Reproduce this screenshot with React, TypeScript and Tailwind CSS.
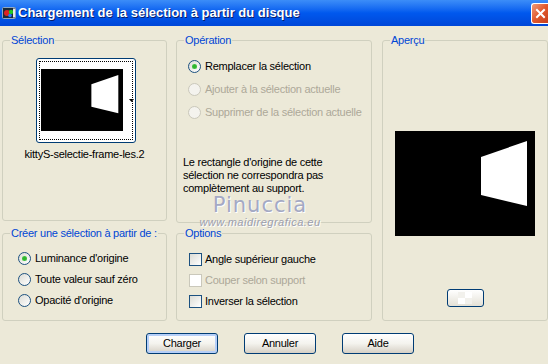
import React from "react";

const font = { fontFamily: '"Liberation Sans", Arial, sans-serif' };

function Group({
  label,
  className,
  children,
}: {
  label: string;
  className?: string;
  children?: React.ReactNode;
}) {
  return (
    <div className={`relative rounded-[3px] border border-[#d0d0bf] ${className ?? ""}`}>
      <span className="absolute -top-[7px] left-[7px] whitespace-nowrap bg-[#ece9d8] px-[1px] text-[11px] leading-[13px] text-[#0046d5]">
        {label}
      </span>
      {children}
    </div>
  );
}

function Radio({ label, checked, disabled }: { label: string; checked?: boolean; disabled?: boolean }) {
  return (
    <div className="flex h-[13px] items-center gap-[4px]">
      <span
        className={`flex h-[13px] w-[13px] items-center justify-center rounded-full border ${
          disabled
            ? "border-[#cac8bb] bg-[#f4f3ee]"
            : "border-[#1c5180] bg-gradient-to-br from-[#dcdcd5] to-white"
        }`}
      >
        {checked && <span className="h-[5px] w-[5px] rounded-full bg-[#2fb52f] shadow-[inset_0_0_1px_#8ee88e]" />}
      </span>
      <span className={`whitespace-nowrap text-[11px] leading-[13px] ${disabled ? "text-[#aca899]" : "text-black"}`}>
        {label}
      </span>
    </div>
  );
}

function Check({ label, disabled }: { label: string; disabled?: boolean }) {
  return (
    <div className="flex h-[13px] items-center gap-[3px]">
      <span
        className={`h-[13px] w-[13px] border ${
          disabled ? "border-[#cac8bb] bg-white" : "border-[#1c5180] bg-gradient-to-br from-[#dcdcd5] to-white"
        }`}
      />
      <span className={`whitespace-nowrap text-[11px] leading-[13px] ${disabled ? "text-[#aca899]" : "text-black"}`}>
        {label}
      </span>
    </div>
  );
}

function Btn({ label, primary }: { label: string; primary?: boolean }) {
  return (
    <button
      type="button"
      className={`h-[21px] w-[72px] rounded-[3px] border border-[#003c74] bg-gradient-to-b from-white via-[#f4f3ee] to-[#d6d0c5] text-[11px] text-black ${
        primary ? "shadow-[inset_0_0_0_2px_#b6cff8]" : ""
      }`}
    >
      {label}
    </button>
  );
}

function Frame({ w, h }: { w: number; h: number }) {
  // black thumbnail with the white quad of the selection
  return (
    <svg width={w} height={h} viewBox="0 0 140 105" preserveAspectRatio="none">
      <rect width="140" height="105" fill="#000" />
      <polygon points="86,26 132,10 132,75 86,64" fill="#fff" />
    </svg>
  );
}

export default function App() {
  return (
    <div
      className="relative h-[364px] w-[548px] overflow-hidden bg-[#ece9d8] tracking-[-0.25px] text-black"
      style={font}
    >
      {/* title bar */}
      <div className="flex h-[26px] items-center bg-gradient-to-b from-[#3c8df8] via-[#0058ee] to-[#0047d8]">
        <svg width="14" height="14" viewBox="0 0 14 14" className="ml-[2px]">
          <rect x="0.5" y="1.5" width="13" height="11" rx="1" fill="#1a2a3a" stroke="#8fa8c0" />
          <circle cx="5" cy="7" r="3" fill="#d22" />
          <circle cx="9" cy="6" r="2.2" fill="#2c2" />
          <circle cx="8" cy="9.5" r="1.8" fill="#27f" />
          <rect x="11" y="2.5" width="2" height="9" fill="#e8e8e8" />
        </svg>
        <span className="ml-[2px] text-[13px] font-bold tracking-normal text-white [text-shadow:1px_1px_0_#0a1e6a]">
          Chargement de la sélection à partir du disque
        </span>
        <div className="ml-auto flex h-[21px] w-[17px] items-center justify-center rounded-l-[3px] border border-r-0 border-white bg-gradient-to-br from-[#ef9a78] via-[#e0582c] to-[#c8401c]">
          <svg width="11" height="11" viewBox="0 0 11 11">
            <path d="M2 2 L9 9 M9 2 L2 9" stroke="#fff" strokeWidth="2" strokeLinecap="square" />
          </svg>
        </div>
      </div>

      {/* body */}
      <div className="flex pl-[2px] pt-[14px]">
        <div className="flex w-[165px] flex-col gap-[12px]">
          <Group label="Sélection" className="h-[181px]">
            <div className="pl-[33px] pt-[17px]">
              <div className="relative h-[85px] w-[100px] rounded-[3px] border border-[#003c74] bg-white">
                <div className="absolute inset-[2px] border border-dotted border-black" />
                <div className="flex h-full items-center pb-[1px] pl-[4px]">
                  <Frame w={82} h={62} />
                  <svg width="5" height="3" viewBox="0 0 5 3" className="ml-[6px]">
                    <path d="M0 0 H5 L2.5 3 Z" fill="#000" />
                  </svg>
                </div>
              </div>
            </div>
            <div className="mt-[5px] text-center text-[11px] leading-[13px]">kittyS-selectie-frame-les.2</div>
          </Group>
          <Group label="Créer une sélection à partir de :" className="h-[88px]">
            <div className="flex flex-col gap-[8px] pl-[15px] pt-[18px]">
              <Radio label="Luminance d'origine" checked />
              <Radio label="Toute valeur sauf zéro" />
              <Radio label="Opacité d'origine" />
            </div>
          </Group>
        </div>

        <div className="ml-[9px] flex w-[196px] flex-col gap-[10px]">
          <Group label="Opération" className="h-[183px]">
            <div className="flex flex-col gap-[10px] pl-[11px] pt-[19px]">
              <Radio label="Remplacer la sélection" checked />
              <Radio label="Ajouter à la sélection actuelle" disabled />
              <Radio label="Supprimer de la sélection actuelle" disabled />
            </div>
            <p className="mt-[37px] pl-[6px] text-[11px] leading-[13px]">
              Le rectangle d'origine de cette
              <br />
              sélection ne correspondra pas
              <br />
              complètement au support.
            </p>
          </Group>
          <Group label="Options" className="h-[88px]">
            <div className="flex flex-col gap-[8px] pl-[12px] pt-[19px]">
              <Check label="Angle supérieur gauche" />
              <Check label="Couper selon support" disabled />
              <Check label="Inverser la sélection" />
            </div>
          </Group>
        </div>

        <div className="ml-[10px] w-[166px]">
          <Group label="Aperçu" className="flex h-[281px] flex-col items-center">
            <div className="mt-[90px]">
              <Frame w={140} h={105} />
            </div>
            <div className="mt-[53px] flex h-[18px] w-[37px] items-center justify-center rounded-[3px] border border-[#003c74] bg-gradient-to-b from-white to-[#e4e1d6]">
              <svg width="14" height="12" viewBox="0 0 14 12">
                <rect x="0" y="0" width="7" height="6" fill="#f2f1ec" />
                <rect x="7" y="6" width="7" height="6" fill="#f2f1ec" />
                <rect x="7" y="0" width="7" height="6" fill="#ffffff" />
                <rect x="0" y="6" width="7" height="6" fill="#ffffff" />
              </svg>
            </div>
          </Group>
        </div>
      </div>

      {/* buttons */}
      <div className="mt-[12px] flex gap-[26px] pl-[146px]">
        <Btn label="Charger" primary />
        <Btn label="Annuler" />
        <Btn label="Aide" />
      </div>

      {/* watermark */}
      <div className="pointer-events-none absolute left-[200px] top-[194px] flex w-[120px] flex-col items-center">
        <span
          className="text-[21px] leading-[22px] tracking-[1px] text-[#a4a9c4] [text-shadow:1px_1px_0_#fff]"
          style={{ fontFamily: '"DejaVu Sans", sans-serif' }}
        >
          Pinuccia
        </span>
        <span className="text-[11px] italic leading-[12px] tracking-[0.5px] text-[#9c9fae] [text-shadow:1px_1px_0_#fff]">
          www.maidiregrafica.eu
        </span>
      </div>
    </div>
  );
}
